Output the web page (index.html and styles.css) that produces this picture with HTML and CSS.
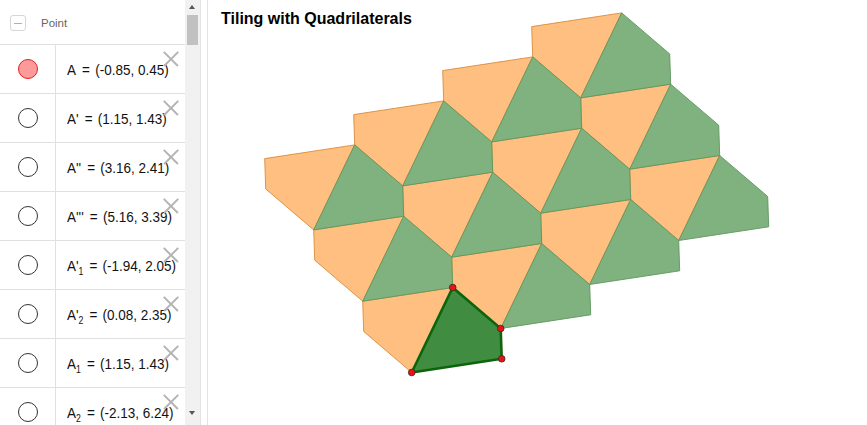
FILE: index.html
```html
<!DOCTYPE html>
<html>
<head>
<meta charset="utf-8">
<link rel="stylesheet" href="styles.css">
</head>
<body>
<div class="app">
  <div class="algebra">
    <div class="list">
      <div class="header">
        <span class="collapse"></span>
        <span class="group">Point</span>
      </div>
      <div class="row"><div class="mcell"><span class="marble on"></span></div><div class="tcell"><span class="expr">A<span class="eq">=</span>(-0.85, 0.45)</span></div><span class="close"></span></div>
      <div class="row"><div class="mcell"><span class="marble"></span></div><div class="tcell"><span class="expr">A'<span class="eq">=</span>(1.15, 1.43)</span></div><span class="close"></span></div>
      <div class="row"><div class="mcell"><span class="marble"></span></div><div class="tcell"><span class="expr">A''<span class="eq">=</span>(3.16, 2.41)</span></div><span class="close"></span></div>
      <div class="row"><div class="mcell"><span class="marble"></span></div><div class="tcell"><span class="expr">A'''<span class="eq">=</span>(5.16, 3.39)</span></div><span class="close"></span></div>
      <div class="row"><div class="mcell"><span class="marble"></span></div><div class="tcell"><span class="expr">A'<sub>1</sub><span class="eq">=</span>(-1.94, 2.05)</span></div><span class="close"></span></div>
      <div class="row"><div class="mcell"><span class="marble"></span></div><div class="tcell"><span class="expr">A'<sub>2</sub><span class="eq">=</span>(0.08, 2.35)</span></div><span class="close"></span></div>
      <div class="row"><div class="mcell"><span class="marble"></span></div><div class="tcell"><span class="expr">A<sub>1</sub><span class="eq">=</span>(1.15, 1.43)</span></div><span class="close"></span></div>
      <div class="row"><div class="mcell"><span class="marble"></span></div><div class="tcell"><span class="expr">A<sub>2</sub><span class="eq">=</span>(-2.13, 6.24)</span></div><span class="close"></span></div>
    </div>
    <div class="scrollbar">
      <span class="arrow up"></span>
      <span class="thumb"></span>
      <span class="arrow down"></span>
    </div>
  </div>
  <div class="splitter"></div>
  <div class="graphics">
    <svg class="canvas" width="659" height="425" viewBox="208 0 659 425">
      <defs>
        <polygon id="og" points="411.7,372.5 363.7,331.5 362.7,301.2 452.7,287.5" class="orange"/>
        <polygon id="gg" points="452.7,287.5 500.7,328.5 501.7,358.8 411.7,372.5" class="green"/>
      </defs>
      <use href="#og"/>
      <use href="#og" transform="translate(89,-44)"/>
      <use href="#og" transform="translate(178,-88)"/>
      <use href="#og" transform="translate(267,-132)"/>
      <use href="#og" transform="translate(-49,-71.3)"/>
      <use href="#og" transform="translate(40,-115.3)"/>
      <use href="#og" transform="translate(129,-159.3)"/>
      <use href="#og" transform="translate(218,-203.3)"/>
      <use href="#og" transform="translate(-98,-142.6)"/>
      <use href="#og" transform="translate(-9,-186.6)"/>
      <use href="#og" transform="translate(80,-230.6)"/>
      <use href="#og" transform="translate(169,-274.6)"/>
      <use href="#gg" transform="translate(89,-44)"/>
      <use href="#gg" transform="translate(178,-88)"/>
      <use href="#gg" transform="translate(267,-132)"/>
      <use href="#gg" transform="translate(-49,-71.3)"/>
      <use href="#gg" transform="translate(40,-115.3)"/>
      <use href="#gg" transform="translate(129,-159.3)"/>
      <use href="#gg" transform="translate(218,-203.3)"/>
      <use href="#gg" transform="translate(-98,-142.6)"/>
      <use href="#gg" transform="translate(-9,-186.6)"/>
      <use href="#gg" transform="translate(80,-230.6)"/>
      <use href="#gg" transform="translate(169,-274.6)"/>
      <polygon class="base" points="452.7,287.5 500.7,328.5 501.7,358.8 411.7,372.5"/>
      <circle class="pt" cx="452.7" cy="287.5" r="3.3"/>
      <circle class="pt" cx="500.7" cy="328.5" r="3.3"/>
      <circle class="pt" cx="501.7" cy="358.8" r="3.3"/>
      <circle class="pt" cx="411.7" cy="372.5" r="3.3"/>
    </svg>
    <div class="title">Tiling with Quadrilaterals</div>
  </div>
</div>
</body>
</html>
```
FILE: styles.css
```css
html, body {
  margin: 0;
  padding: 0;
  background: #fff;
}
body {
  font-family: "Liberation Sans", Arial, sans-serif;
  overflow: hidden;
}
.app {
  display: flex;
  width: 867px;
  height: 425px;
  overflow: hidden;
}
.algebra {
  width: 200px;
  display: flex;
  flex: none;
  height: 425px;
  overflow: hidden;
}
.list {
  width: 185px;
  flex: none;
}
.header {
  border-bottom: 1px solid #e0e0e0;
  display: flex;
  align-items: center;
  box-sizing: border-box;
  height: 45px;
  padding-left: 10px;
}
.collapse {
  width: 14px;
  height: 14px;
  border: 1px solid #d6d6d6;
  border-radius: 3px;
  position: relative;
  margin-right: 15px;
  margin-top: 2px;
}
.collapse::after {
  content: "";
  position: absolute;
  left: 3px;
  right: 3px;
  top: 6.5px;
  height: 1px;
  background: #b0b0b0;
}
.group {
  font-size: 11.5px;
  color: #666;
  margin-top: 1px;
}
.row {
  height: 48px;
  border-bottom: 1px solid #e0e0e0;
  display: flex;
  position: relative;
}
.mcell {
  width: 56px;
  flex: none;
  border-right: 1px solid #e0e0e0;
  display: flex;
  align-items: center;
  justify-content: center;
  box-sizing: border-box;
}
.marble {
  width: 18px;
  height: 18px;
  border-radius: 50%;
  border: 1px solid #333;
  background: #fff;
  margin-left: 1px;
}
.marble.on {
  background: #ff9a9a;
  border-color: #e02020;
}
.tcell {
  display: flex;
  align-items: center;
  padding-left: 11px;
  font-size: 15.5px;
  color: #111;
  white-space: nowrap;
  overflow: hidden;
  flex: 1;
}
.expr {
  display: inline-block;
  transform: scaleX(0.87);
  transform-origin: 0 50%;
  margin-top: 1px;
}
.eq {
  margin: 0 6px 0 7px;
}
.expr sub {
  font-size: 10px;
  vertical-align: -4px;
  line-height: 0;
}
.close {
  position: absolute;
  left: 163px;
  top: 6px;
  width: 16px;
  height: 16px;
}
.close::before, .close::after {
  content: "";
  position: absolute;
  left: -2px;
  top: 7px;
  width: 20px;
  height: 1.5px;
  background: #b4b4b4;
  transform: rotate(45deg);
}
.close::after {
  transform: rotate(-45deg);
}
.scrollbar {
  width: 15px;
  flex: none;
  background: #f1f1f1;
  position: relative;
}
.thumb {
  position: absolute;
  left: 2px;
  top: 15px;
  width: 11px;
  height: 30px;
  background: #c1c1c1;
}
.arrow {
  position: absolute;
  left: 4px;
  width: 0;
  height: 0;
  border-left: 3.5px solid transparent;
  border-right: 3.5px solid transparent;
}
.arrow.up {
  top: 5px;
  border-bottom: 4px solid #555;
}
.arrow.down {
  top: 411px;
  border-top: 4px solid #555;
}
.splitter {
  width: 6px;
  flex: none;
  border-left: 1px solid #e3e3e3;
  border-right: 1px solid #e3e3e3;
  background: #fff;
}
.graphics {
  flex: 1;
  position: relative;
  height: 425px;
}
.canvas {
  position: absolute;
  left: 0;
  top: 0;
  display: block;
}
.title {
  position: relative;
  padding: 10px 0 0 13px;
  font-size: 16px;
  font-weight: bold;
  color: #000;
}
.orange {
  fill: #ffbf80;
  stroke: #d98c3a;
  stroke-width: 0.9;
}
.green {
  fill: #7fb27f;
  stroke: #5d965d;
  stroke-width: 0.9;
}
.base {
  fill: #408c40;
  stroke: #0b650b;
  stroke-width: 2.6;
  stroke-linejoin: round;
}
.pt {
  fill: #ee1111;
  stroke: #333;
  stroke-width: 0.9;
}
```
